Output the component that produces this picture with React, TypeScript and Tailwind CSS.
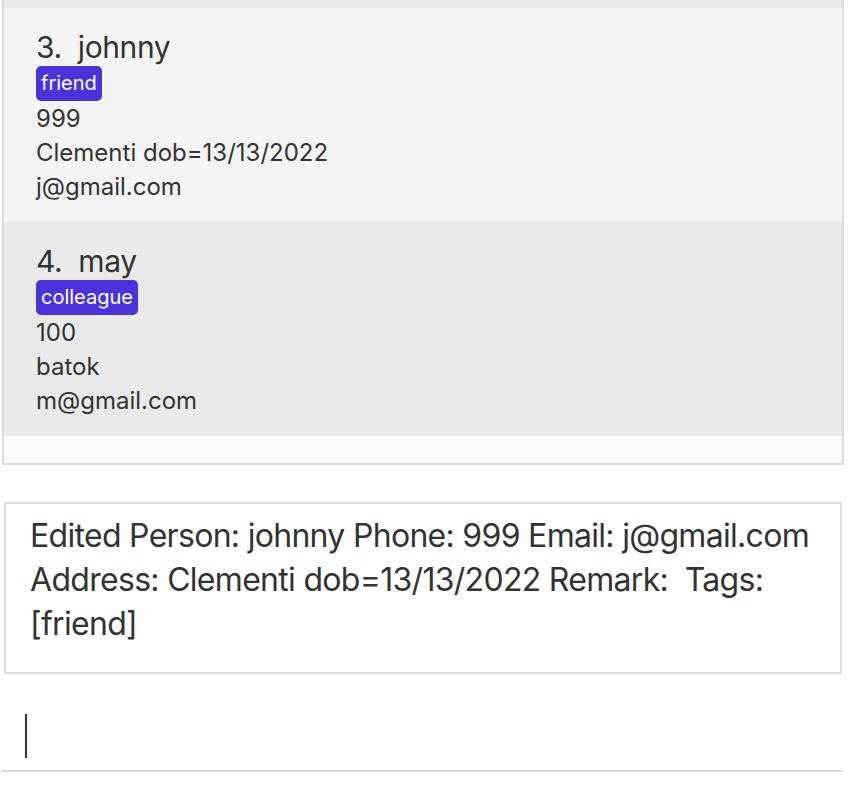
const persons = [
  {
    index: 3,
    name: 'johnny',
    tags: ['friend'],
    phone: '999',
    address: 'Clementi dob=13/13/2022',
    email: 'j@gmail.com',
    bg: 'bg-[#f4f4f4]',
  },
  {
    index: 4,
    name: 'may',
    tags: ['colleague'],
    phone: '100',
    address: 'batok',
    email: 'm@gmail.com',
    bg: 'bg-[#e9e9e9]',
  },
];

function PersonCard({ p }: { p: (typeof persons)[number] }) {
  return (
    <div className={`h-[214px] shrink-0 pl-[32px] pt-[21px] ${p.bg}`}>
      <div className="text-[30px] leading-[36px] tracking-[-0.4px] text-[#333]">
        {p.index}.&nbsp;&nbsp;{p.name}
      </div>
      <div className="mt-[1px] flex gap-2">
        {p.tags.map((tag) => (
          <span
            key={tag}
            className="h-[35px] rounded-[5px] bg-[#4a34d9] px-[5px] text-[20px] leading-[35px] text-white"
          >
            {tag}
          </span>
        ))}
      </div>
      <div className="mt-[1px] text-[24px] leading-[34px] text-[#333]">
        <div>{p.phone}</div>
        <div>{p.address}</div>
        <div>{p.email}</div>
      </div>
    </div>
  );
}

export default function App() {
  return (
    <div className="relative h-[792px] w-[850px] overflow-hidden bg-white font-['Inter','Liberation_Sans',sans-serif]">
      {/* Person list */}
      <div className="ml-[2px] flex h-[465px] w-[842px] flex-col border-2 border-t-0 border-[#dddddd] bg-[#fafafa]">
        <div className="h-[8px] shrink-0 bg-[#e9e9e9]" />
        {persons.map((p) => (
          <PersonCard key={p.index} p={p} />
        ))}
      </div>

      {/* Result display */}
      <div className="ml-[4px] mt-[37px] h-[172px] w-[838px] border-2 border-[#dddddd] bg-white pl-[24px] pr-[16px] pt-[10px] text-[32px] leading-[44px] tracking-[-0.7px] text-[#333]">
        Edited Person: johnny Phone: 999 Email: j@gmail.com Address: Clementi
        dob=13/13/2022 Remark:&nbsp; Tags: [friend]
      </div>

      {/* Command box */}
      <div className="ml-[2px] h-[98px] w-[841px] border-b-2 border-[#dddddd] pl-[23px] pt-[40px]">
        <div className="h-[44px] w-[2px] bg-[#333]" />
      </div>
    </div>
  );
}
